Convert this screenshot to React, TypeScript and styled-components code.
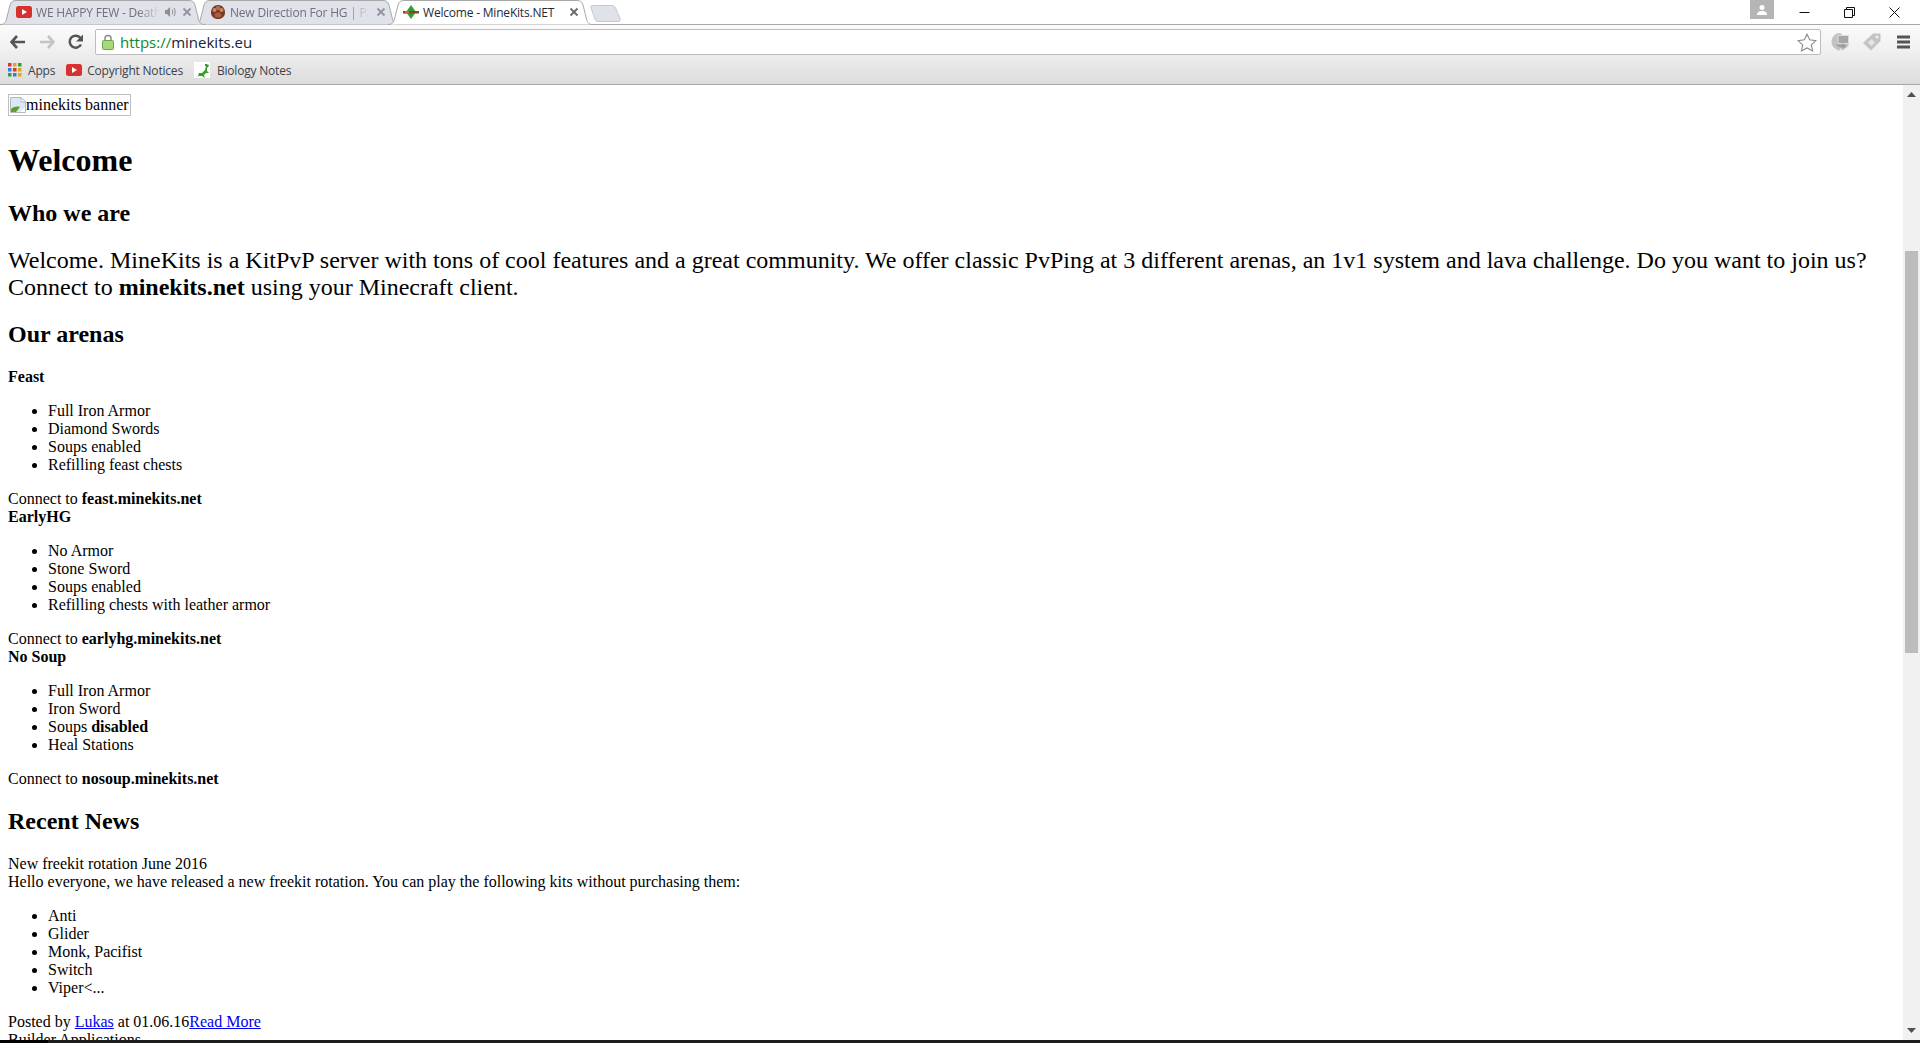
import React from "react";
import styled, { createGlobalStyle } from "styled-components";

const GlobalStyle = createGlobalStyle`
  html, body {
    margin: 0;
    height: 100%;
    overflow: hidden;
    background: #fff;
  }
`;

const Shell = styled.div`
  height: 100vh;
  display: flex;
  flex-direction: column;
  overflow: hidden;
`;

const TabStrip = styled.div`
  height: 24px;
  flex: none;
  display: flex;
  align-items: flex-start;
  background: #fff;
  font: 12px "Open Sans", "Noto Sans", sans-serif;
  position: relative;
  z-index: 2;
`;

const Tab = styled.div<{ $active?: boolean; $order: number }>`
  position: relative;
  width: 205px;
  height: 25px;
  flex: none;
  margin-left: ${(p) => (p.$order === 0 ? "0" : "-11px")};
  z-index: ${(p) => (p.$active ? 5 : 3 - p.$order)};
  display: flex;
  align-items: center;
  padding: 0 ${(p) => (p.$active ? "14px" : "13px")} 1px ${(p) => (p.$active ? "15px" : "16px")};
  box-sizing: border-box;
  color: ${(p) => (p.$active ? "#1f2a38" : "#6d7178")};
`;

const TabShape = styled.svg`
  position: absolute;
  left: 0;
  top: 0;
  z-index: -1;
`;

const TabTitle = styled.span<{ $fade?: boolean }>`
  flex: 1;
  min-width: 0;
  margin-left: 4px;
  white-space: nowrap;
  overflow: hidden;
  letter-spacing: -0.2px;
  ${(p) => p.$fade && "mask-image: linear-gradient(to right, #000 82%, transparent 100%);"}
`;

const TabClose = styled.svg`
  flex: none;
  margin-left: 6px;
`;

const NewTab = styled.svg`
  flex: none;
  margin: 5px 0 0 -4px;
  position: relative;
  z-index: 1;
`;

const StripSpacer = styled.div`
  flex: 1;
`;

const ProfileBadge = styled.div`
  width: 24px;
  height: 19px;
  background: #b5b5b5;
  display: flex;
  align-items: center;
  justify-content: center;
  margin-right: 8px;
`;

const WindowButton = styled.div`
  width: 45px;
  height: 24px;
  display: flex;
  align-items: center;
  justify-content: center;
`;

const WindowButtons = styled.div`
  display: flex;
  padding-right: 3px;
`;

const Chrome = styled.div`
  flex: none;
  height: 61px;
  box-sizing: border-box;
  background: linear-gradient(#fbfbfb, #f1f1f1 40%, #dcdcdc);
  border-top: 1px solid #a9a9a9;
  border-bottom: 1px solid #a9a9a9;
`;

const Toolbar = styled.div`
  height: 31px;
  display: flex;
  align-items: center;
  padding-top: 3px;
  box-sizing: border-box;
`;

const NavButton = styled.div`
  width: 29px;
  height: 24px;
  display: flex;
  align-items: center;
  justify-content: center;
`;

const NavGroup = styled.div`
  display: flex;
  padding: 0 5px 0 3px;
`;

const AddressBox = styled.div`
  flex: 1;
  height: 26px;
  background: #fff;
  border: 1px solid #bdbdbd;
  border-radius: 2px;
  display: flex;
  align-items: center;
  padding: 0 3px 0 6px;
  box-sizing: border-box;
  font: 15px "Open Sans", "Noto Sans", sans-serif;
`;

const Url = styled.span`
  flex: 1;
  margin-left: 6px;
  color: #15233a;
`;

const UrlScheme = styled.span`
  color: #0b8a2a;
`;

const ExtGroup = styled.div`
  width: 99px;
  flex: none;
  display: flex;
  align-items: center;
  padding-left: 9px;
  gap: 12px;
  box-sizing: border-box;
`;

const BookmarkBar = styled.div`
  height: 28px;
  display: flex;
  align-items: center;
  padding-left: 8px;
  font: 12px "Open Sans", "Noto Sans", sans-serif;
  color: #3c4048;
  letter-spacing: -0.2px;
`;

const Bookmark = styled.div<{ $gap?: number }>`
  display: flex;
  align-items: center;
  gap: ${(p) => p.$gap ?? 5}px;
  margin-right: 11px;
`;

const Viewport = styled.div`
  flex: 1;
  min-height: 0;
  display: flex;
`;

const Page = styled.main`
  flex: 1;
  min-width: 0;
  padding: 9px 8px 8px;
  overflow: hidden;
  font: 16px "Liberation Serif", "Times New Roman", serif;
  color: #000;
`;

const BrokenImage = styled.span`
  display: inline-flex;
  align-items: center;
  height: 20px;
  border: 1px solid #c0c0c0;
  padding: 0 1px;
`;

const PageTitle = styled.h1`
  font-size: 32px;
  margin: 25px 0 21.44px;
`;

const SectionTitle = styled.h2`
  font-size: 24px;
  margin: 19.92px 0;
`;

const Lead = styled.p`
  font-size: 24px;
  line-height: 27px;
  margin: 20px 0;
`;

const ArenaName = styled.p`
  font-weight: bold;
  margin: 0 0 16px;
`;

const ItemList = styled.ul`
  margin: 16px 0;
  padding-left: 40px;
`;

const Line = styled.div``;

const NewsLink = styled.a`
  color: #0000ee;
  text-decoration: underline;
`;

const ScrollTrack = styled.div`
  width: 17px;
  flex: none;
  background: #f1f1f1;
  display: flex;
  flex-direction: column;
  align-items: center;
`;

const ScrollArrow = styled.svg`
  flex: none;
  margin: 7px 0;
`;

const ScrollThumb = styled.div`
  width: 13px;
  height: 402px;
  background: #bcbcbc;
  margin-top: 147px;
`;

const TrackRest = styled.div`
  flex: 1;
`;

const TaskbarEdge = styled.div`
  flex: none;
  height: 3px;
  background: #1c1c1c;
  display: flex;
`;

const TaskbarStart = styled.div`
  width: 48px;
  background: #000;
`;

const YouTubeIcon = () => (
  <svg width="16" height="12" viewBox="0 0 16 12" style={{ flex: "none" }}>
    <rect width="16" height="12" rx="2.5" fill="#d8302c" />
    <path d="M6 3l5 3-5 3z" fill="#fff" />
  </svg>
);

const CloseGlyph = ({ color = "#8a8d92" }: { color?: string }) => (
  <TabClose width="10" height="10" viewBox="0 0 10 10">
    <path d="M1.5 1.5l7 7M8.5 1.5l-7 7" stroke={color} strokeWidth="1.8" fill="none" />
  </TabClose>
);

const tabPath =
  "M0 24.5C4 24.5 5.500 23 6.500 19L10 5C11 2 12.500 0.500 16 0.500L189 0.500C192.500 0.500 194 2 195 5L198.500 19C199.500 23 201 24.500 205 24.500";

const BrowserTab = ({
  order,
  active,
  fade,
  icon,
  title,
  extra,
}: {
  order: number;
  active?: boolean;
  fade?: boolean;
  icon: React.ReactNode;
  title: string;
  extra?: React.ReactNode;
}) => (
  <Tab $order={order} $active={active}>
    <TabShape width="205" height="25" viewBox="0 0 205 25">
      <path d={tabPath} fill={active ? "#fff" : "#dfe3e9"} stroke="#a8a8a8" strokeWidth="1" />
    </TabShape>
    {icon}
    <TabTitle $fade={fade}>{title}</TabTitle>
    {extra}
    <CloseGlyph color={active ? "#6a6a6a" : "#8f949b"} />
  </Tab>
);

const appsColors = ["#d8372c", "#e9a21b", "#2f9e44", "#3b78e7", "#d8372c", "#e9a21b", "#2f9e44", "#3b78e7", "#e9a21b"];

const arenas = [
  {
    name: "Feast",
    host: "feast.minekits.net",
    items: ["Full Iron Armor", "Diamond Swords", "Soups enabled", "Refilling feast chests"],
  },
  {
    name: "EarlyHG",
    host: "earlyhg.minekits.net",
    items: ["No Armor", "Stone Sword", "Soups enabled", "Refilling chests with leather armor"],
  },
];

export default function App() {
  return (
    <Shell>
      <GlobalStyle />
      <TabStrip>
        <BrowserTab
          order={0}
          fade
          title="WE HAPPY FEW - Death Trailer"
          icon={<YouTubeIcon />}
          extra={
            <svg width="12" height="12" viewBox="0 0 12 12" style={{ flex: "none", marginLeft: 4 }}>
              <path d="M1 4h2l3-3v10L3 8H1z" fill="#8a8d92" />
              <path d="M8 3.500c1 1.500 1 3.500 0 5M10 2c1.600 2.500 1.600 5.500 0 8" stroke="#8a8d92" fill="none" />
            </svg>
          }
        />
        <BrowserTab
          order={1}
          fade
          title="New Direction For HG | Page 2"
          icon={
            <svg width="16" height="16" viewBox="0 0 16 16" style={{ flex: "none" }}>
              <path d="M8 1C12 1 15 4 15 8.500 15 12.500 12 15 8 15 4 15 1 12.500 1 8.500 1 4 4 1 8 1z" fill="#7a3a24" />
              <circle cx="4.500" cy="6" r="2" fill="#c98a64" />
              <circle cx="8" cy="4" r="2" fill="#b5734e" />
              <circle cx="11.500" cy="6" r="2" fill="#c98a64" />
              <ellipse cx="8" cy="11" rx="3.500" ry="2.500" fill="#a8603e" />
            </svg>
          }
        />
        <BrowserTab
          order={2}
          active
          title="Welcome - MineKits.NET"
          icon={
            <svg width="16" height="14" viewBox="0 0 16 14" style={{ flex: "none" }}>
              <path d="M8 0l5 7-5 7-5-7z" fill="#2f9e3a" />
              <rect x="0" y="6" width="16" height="2.500" fill="#7a4a20" />
              <rect x="2" y="6" width="4" height="2.500" fill="#d8662c" />
            </svg>
          }
        />
        <NewTab width="33" height="17" viewBox="0 0 33 17">
          <path d="M3.500 0.500H23C25 0.500 25.800 1.500 26.500 3L31 13.500C31.700 15.500 31 16.500 29 16.500H9C7.500 16.500 6.500 15.500 6 14L2 3C1.500 1.500 2 0.500 3.500 0.500z" fill="#dfe3e9" stroke="#c5c9cf" />
        </NewTab>
        <StripSpacer />
        <ProfileBadge>
          <svg width="12" height="12" viewBox="0 0 12 12">
            <circle cx="6" cy="3.500" r="2.500" fill="#fff" />
            <path d="M1 11c0-3 2-4 5-4s5 1 5 4z" fill="#fff" />
          </svg>
        </ProfileBadge>
        <WindowButtons>
          <WindowButton>
            <svg width="11" height="11" viewBox="0 0 11 11">
              <path d="M0.500 5.500h10" stroke="#111" />
            </svg>
          </WindowButton>
          <WindowButton>
            <svg width="11" height="11" viewBox="0 0 11 11">
              <path d="M0.500 2.500h8v8h-8zM2.500 2.500v-2h8v8h-2" stroke="#111" fill="none" />
            </svg>
          </WindowButton>
          <WindowButton>
            <svg width="11" height="11" viewBox="0 0 11 11">
              <path d="M0.500 0.500l10 10M10.500 0.500l-10 10" stroke="#111" fill="none" />
            </svg>
          </WindowButton>
        </WindowButtons>
      </TabStrip>

      <Chrome>
        <Toolbar>
          <NavGroup>
            <NavButton>
              <svg width="16" height="14" viewBox="0 0 16 14">
                <path d="M7 1L1.500 7 7 13M2 7h13" stroke="#555" strokeWidth="2.600" fill="none" />
              </svg>
            </NavButton>
            <NavButton>
              <svg width="16" height="14" viewBox="0 0 16 14">
                <path d="M9 1l5.500 6L9 13M14 7H1" stroke="#c4c4c4" strokeWidth="2.600" fill="none" />
              </svg>
            </NavButton>
            <NavButton>
              <svg width="16" height="16" viewBox="0 0 16 16">
                <path d="M13 10.500A6 6 0 1 1 12.500 4" stroke="#555" strokeWidth="2.500" fill="none" />
                <path d="M15 0.500V7.500H8z" fill="#555" />
              </svg>
            </NavButton>
          </NavGroup>
          <AddressBox>
            <svg width="12" height="16" viewBox="0 0 12 16" style={{ flex: "none" }}>
              <path d="M3 7V4.500a3 3 0 0 1 6 0V7" stroke="#8b8b8b" strokeWidth="1.500" fill="none" />
              <rect x="0.500" y="6.500" width="11" height="9" rx="1" fill="#a8d878" stroke="#6aa84f" />
            </svg>
            <Url>
              <UrlScheme>https://</UrlScheme>minekits.eu
            </Url>
            <svg width="20" height="19" viewBox="0 0 18 17" style={{ flex: "none" }}>
              <path d="M9 1l2.400 5.100 5.600 0.700-4.100 3.800 1.100 5.500L9 13.400 4 16.100l1.100-5.500L1 6.800l5.600-0.700z" fill="#fff" stroke="#8a8a8a" />
            </svg>
          </AddressBox>
          <ExtGroup>
            <svg width="20" height="20" viewBox="0 0 20 20">
              <path d="M10 1a8.500 8.500 0 0 0-8.500 8.500c0 4.500 3.500 8.500 8.500 9l1-2.500 1.500 2.500 6-4.500V3.500H12.500A8 8 0 0 0 10 1z" fill="#c2c2c2" />
              <rect x="8" y="3.500" width="10.500" height="8" fill="#a6a6a6" stroke="#dcdcdc" />
              <path d="M6 12.500h6.500V11l4 3-4 3v-1.500C9 15.500 7 14.500 6 12.500z" fill="#9e9e9e" />
            </svg>
            <svg width="20" height="20" viewBox="0 0 20 20">
              <path d="M1 11L11 1.500h7.500V9L9 18.500z" fill="#c4c4c4" />
              <circle cx="15" cy="5" r="1.500" fill="#f1f1f1" />
              <rect x="7" y="8" width="5" height="5" fill="#e4e4e4" transform="rotate(45 9.500 10.500)" />
            </svg>
            <svg width="13" height="14" viewBox="0 0 13 14" style={{ marginLeft: 3 }}>
              <rect y="0.500" width="13" height="3" fill="#555" />
              <rect y="5.500" width="13" height="3" fill="#555" />
              <rect y="10.500" width="13" height="3" fill="#555" />
            </svg>
          </ExtGroup>
        </Toolbar>
        <BookmarkBar>
          <Bookmark $gap={6}>
            <svg width="14" height="14" viewBox="0 0 14 14" style={{ flex: "none" }}>
              {appsColors.map((c, i) => (
                <rect key={i} x={(i % 3) * 5} y={Math.floor(i / 3) * 5} width="3.500" height="3.500" fill={c} />
              ))}
            </svg>
            Apps
          </Bookmark>
          <Bookmark>
            <YouTubeIcon />
            Copyright Notices
          </Bookmark>
          <Bookmark $gap={7}>
            <svg width="16" height="16" viewBox="0 0 16 16" style={{ flex: "none" }}>
              <rect width="16" height="16" fill="#fff" />
              <path d="M1 15l3-1 1-3 3 0 3-3 1-4 2-2 1 2-2 2 0 3 2 2-3 0-2 2 1 3-3-2-3 0z" fill="#3d9a2f" />
              <circle cx="12" cy="3" r="1" fill="#1d5a17" />
            </svg>
            Biology Notes
          </Bookmark>
        </BookmarkBar>
      </Chrome>

      <Viewport>
        <Page>
          <BrokenImage>
            <svg width="16" height="16" viewBox="0 0 16 16" style={{ flex: "none" }}>
              <path d="M0.500 0.500H11L15.500 5V15.500H0.500z" fill="#dce8f8" stroke="#b4bac4" />
              <path d="M11 0.500V5H15.500z" fill="#fff" stroke="#b4bac4" />
              <path d="M1 15V12C4 9.500 7 9 10 10L6 15z" fill="#5aa02c" />
              <path d="M10 15L15 10V15z" fill="#fff" />
            </svg>
            minekits banner
          </BrokenImage>
          <PageTitle>Welcome</PageTitle>
          <SectionTitle>Who we are</SectionTitle>
          <Lead>
            Welcome. MineKits is a KitPvP server with tons of cool features and a great community. We offer classic
            PvPing at 3 different arenas, an 1v1 system and lava challenge. Do you want to join us? Connect to{" "}
            <b>minekits.net</b> using your Minecraft client.
          </Lead>
          <SectionTitle>Our arenas</SectionTitle>
          {arenas.map((a) => (
            <React.Fragment key={a.name}>
              <ArenaName>{a.name}</ArenaName>
              <ItemList>
                {a.items.map((i) => (
                  <li key={i}>{i}</li>
                ))}
              </ItemList>
              <Line>
                Connect to <b>{a.host}</b>
              </Line>
            </React.Fragment>
          ))}
          <ArenaName>No Soup</ArenaName>
          <ItemList>
            <li>Full Iron Armor</li>
            <li>Iron Sword</li>
            <li>
              Soups <b>disabled</b>
            </li>
            <li>Heal Stations</li>
          </ItemList>
          <Line>
            Connect to <b>nosoup.minekits.net</b>
          </Line>
          <SectionTitle>Recent News</SectionTitle>
          <Line>New freekit rotation June 2016</Line>
          <Line>Hello everyone, we have released a new freekit rotation. You can play the following kits without purchasing them:</Line>
          <ItemList>
            <li>Anti</li>
            <li>Glider</li>
            <li>Monk, Pacifist</li>
            <li>Switch</li>
            <li>Viper&lt;...</li>
          </ItemList>
          <Line>
            Posted by <NewsLink href="#">Lukas</NewsLink> at 01.06.16<NewsLink href="#">Read More</NewsLink>
          </Line>
          <Line>Builder Applications</Line>
        </Page>
        <ScrollTrack>
          <ScrollArrow width="9" height="5" viewBox="0 0 9 5">
            <path d="M4.500 0L9 5H0z" fill="#505050" />
          </ScrollArrow>
          <ScrollThumb />
          <TrackRest />
          <ScrollArrow width="9" height="5" viewBox="0 0 9 5">
            <path d="M0 0h9L4.500 5z" fill="#505050" />
          </ScrollArrow>
        </ScrollTrack>
      </Viewport>
      <TaskbarEdge>
        <TaskbarStart />
      </TaskbarEdge>
    </Shell>
  );
}
